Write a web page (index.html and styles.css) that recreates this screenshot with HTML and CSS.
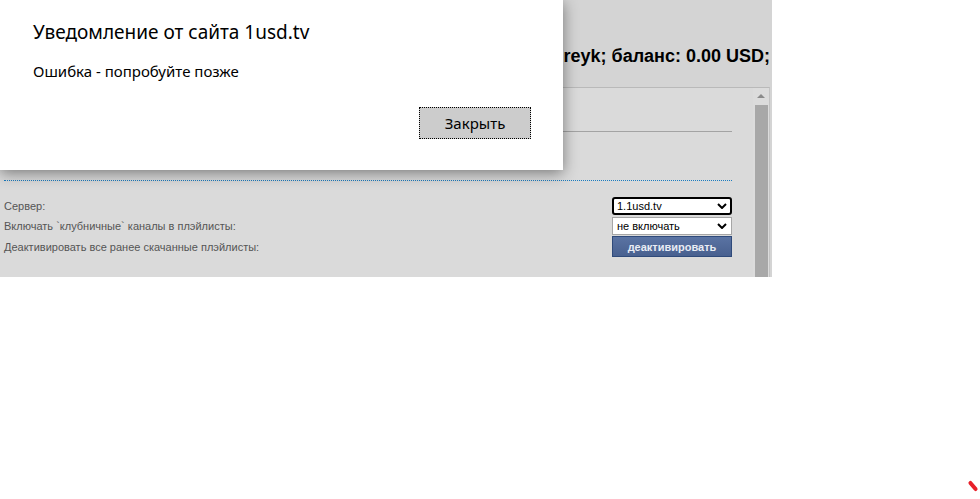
FILE: index.html
```html
<!DOCTYPE html>
<html lang="ru">
<head>
    <meta charset="UTF-8">
    <title>1usd.tv</title>
    <link rel="stylesheet" href="styles.css">
</head>
<body>
    <div class="page">
        <div class="top-bar">
            <div class="user-info">Пользователь: andreyk; баланс: 0.00 USD;</div>
        </div>
        <div class="panel">
            <div class="panel-body">
                <div class="panel-head"></div>
                <div class="panel-sub"></div>
                <div class="settings">
                    <div class="row">
                        <span class="label">Сервер:</span>
                        <div class="select focused">
                            <span>1.1usd.tv</span>
                            <svg class="chevron" viewBox="0 0 10 6" width="10" height="6"><path d="M1 1 L5 5 L9 1" fill="none" stroke="#000" stroke-width="2"/></svg>
                        </div>
                    </div>
                    <div class="row">
                        <span class="label">Включать `клубничные` каналы в плэйлисты:</span>
                        <div class="select">
                            <span>не включать</span>
                            <svg class="chevron" viewBox="0 0 10 6" width="10" height="6"><path d="M1 1 L5 5 L9 1" fill="none" stroke="#000" stroke-width="2"/></svg>
                        </div>
                    </div>
                    <div class="row row-btn">
                        <span class="label">Деактивировать все ранее скачанные плэйлисты:</span>
                        <button class="btn-blue">деактивировать</button>
                    </div>
                </div>
            </div>
            <div class="scrollbar">
                <div class="scroll-up"></div>
                <div class="scroll-thumb"></div>
            </div>
        </div>
    </div>

    <div class="dialog">
        <div class="dialog-title">Уведомление от сайта 1usd.tv</div>
        <div class="dialog-text">Ошибка - попробуйте позже</div>
        <div class="dialog-actions">
            <button class="dialog-btn">Закрыть</button>
        </div>
    </div>

    <div class="corner-mark"></div>
</body>
</html>
```

FILE: styles.css
```css
body {
    margin: 0;
    background: #fff;
    font-family: "Liberation Sans", Arial, sans-serif;
}

.page {
    width: 772px;
    height: 277px;
    background: #d4d4d4;
    overflow: hidden;
}

.top-bar {
    height: 87px;
    display: flex;
    justify-content: flex-end;
    align-items: flex-start;
}

.user-info {
    margin-top: 46px;
    margin-right: 2px;
    font-size: 18px;
    font-weight: bold;
    color: #000;
}

/* settings panel with its own scroll area */
.panel {
    display: flex;
    width: 769px;
    height: 200px;
    border-top: 1px solid #b9b9b9;
    border-right: 1px solid #c4c4c4;
    background: #dadada;
}

.panel-body {
    flex: 1;
    padding: 0 21px 0 4px;
}

.panel-head {
    height: 43px;
    border-bottom: 1px solid #a3a3a3;
}

.panel-sub {
    height: 48px;
    border-bottom: 1px dotted #1a7cc0;
}

.settings {
    padding-top: 15px;
}

.row {
    display: flex;
    justify-content: space-between;
    align-items: center;
    height: 20px;
    font-size: 11px;
    color: #555;
}

.row-btn {
    height: 21px;
}

.select {
    position: relative;
    box-sizing: border-box;
    width: 120px;
    height: 18px;
    padding: 0 0 0 4px;
    border: 1px solid #a6a6a6;
    background: #fff;
    color: #000;
    font-size: 11px;
    line-height: 16px;
}

.select.focused {
    border: 2px solid #000;
    border-radius: 3px;
    line-height: 14px;
    padding-left: 3px;
}

.chevron {
    position: absolute;
    right: 4px;
    top: 5px;
}

.select.focused .chevron {
    top: 4px;
    right: 3px;
}

.btn-blue {
    box-sizing: border-box;
    width: 120px;
    height: 21px;
    border: 1px solid #2f4a7a;
    background: linear-gradient(#5a73a3, #48608f);
    color: #e8ecf4;
    font-family: "Liberation Sans", Arial, sans-serif;
    font-size: 11px;
    font-weight: bold;
    padding: 0;
}

.scrollbar {
    width: 16px;
    background: #dcdcdc;
}

.scroll-up {
    height: 17px;
    position: relative;
}

.scroll-up::after {
    content: "";
    position: absolute;
    left: 4px;
    top: 6px;
    border-left: 4px solid transparent;
    border-right: 4px solid transparent;
    border-bottom: 4px solid #8a8a8a;
}

.scroll-thumb {
    margin: 0 1px 0 2px;
    height: 200px;
    background: #a8a8a8;
}

/* browser alert box */
.dialog {
    position: absolute;
    left: 0;
    top: 0;
    width: 563px;
    height: 170px;
    box-sizing: border-box;
    padding: 18px 32px 0 33px;
    background: #fff;
    box-shadow: 0 3px 14px rgba(0, 0, 0, 0.45);
    font-family: "Noto Sans", "Open Sans", sans-serif;
    color: #000;
}

.dialog-title {
    font-size: 19px;
    line-height: 28px;
}

.dialog-text {
    margin-top: 15px;
    font-size: 15px;
    line-height: 21px;
}

.dialog-actions {
    display: flex;
    justify-content: flex-end;
    margin-top: 25px;
}

.dialog-btn {
    width: 112px;
    height: 32px;
    border: 1px dotted #000;
    background: #cccccc;
    font-family: "Noto Sans", "Open Sans", sans-serif;
    font-size: 15px;
    color: #000;
}

.corner-mark {
    position: absolute;
    left: 971px;
    top: 480px;
    width: 4px;
    height: 12px;
    border-radius: 2px;
    background: #e8202a;
    transform: rotate(-40deg);
}
```
